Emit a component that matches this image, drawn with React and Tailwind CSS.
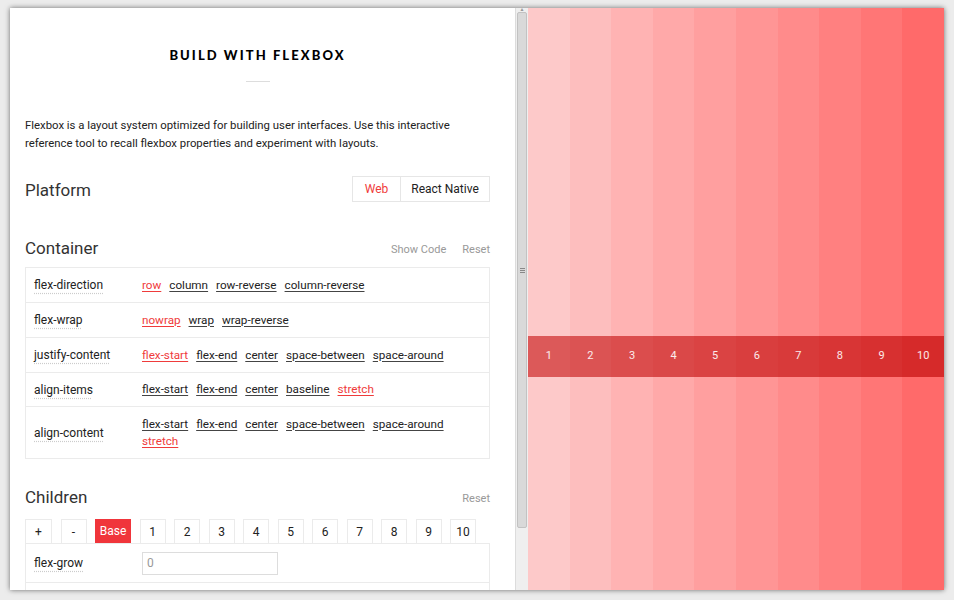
const rows = [
  { label: "flex-direction", values: ["row", "column", "row-reverse", "column-reverse"], active: "row" },
  { label: "flex-wrap", values: ["nowrap", "wrap", "wrap-reverse"], active: "nowrap" },
  { label: "justify-content", values: ["flex-start", "flex-end", "center", "space-between", "space-around"], active: "flex-start" },
  { label: "align-items", values: ["flex-start", "flex-end", "center", "baseline", "stretch"], active: "stretch" },
  {
    label: "align-content",
    values: ["flex-start", "flex-end", "center", "space-between", "space-around", "stretch"],
    active: "stretch",
  },
];

const colBg = [
  "bg-[#fdc9c9]",
  "bg-[#fdbebe]",
  "bg-[#ffb3b3]",
  "bg-[#ffa9a9]",
  "bg-[#ff9f9f]",
  "bg-[#ff9595]",
  "bg-[#ff8b8b]",
  "bg-[#ff8080]",
  "bg-[#ff7676]",
  "bg-[#ff6a6a]",
];

const bandBg = [
  "bg-[#dc5959]",
  "bg-[#db5353]",
  "bg-[#db4d4d]",
  "bg-[#da4848]",
  "bg-[#da4343]",
  "bg-[#d93e3e]",
  "bg-[#d83a3a]",
  "bg-[#d83535]",
  "bg-[#d73030]",
  "bg-[#d62a2a]",
];

const tabs = ["1", "2", "3", "4", "5", "6", "7", "8", "9", "10"];

const Columns = ({ className }) => (
  <div className={"flex " + className}>
    {colBg.map((c) => (
      <div key={c} className={"flex-1 " + c} />
    ))}
  </div>
);

const App = () => {
  return (
    <div className="w-[954px] h-[600px] bg-[#ececec] pl-[10px] pt-[8px] overflow-hidden font-['Roboto',sans-serif]">
      <div className="w-[934px] h-[582px] flex bg-white shadow-[0_0_5px_rgba(0,0,0,0.55)]">
        {/* ---------------- LEFT PANEL ---------------- */}
        <div className="w-[505px] h-full overflow-hidden pl-[15px] pr-[25px] text-[#222]">
          <h1 className="mt-[40px] text-center text-[13px] font-black tracking-[0.16em] font-['Lato',sans-serif] text-black leading-[15px]">
            BUILD WITH FLEXBOX
          </h1>
          <div className="mx-auto mt-[18px] w-[24px] h-px bg-[#ddd]" />

          <p className="mt-[34px] text-[11.35px] leading-[18px]">
            Flexbox is a layout system optimized for building user interfaces. Use this interactive reference tool
            to recall flexbox properties and experiment with layouts.
          </p>

          {/* Platform */}
          <div className="mt-[24px] flex items-center justify-between">
            <h2 className="text-[17px] text-[#333]">Platform</h2>
            <div className="mb-[4px] flex border border-[#e6e6e6] text-[12px] h-[26px]">
              <div className="w-[47px] flex items-center justify-center text-[#ef3b3b]">Web</div>
              <div className="w-[89px] flex items-center justify-center border-l border-[#e6e6e6]">React Native</div>
            </div>
          </div>

          {/* Container */}
          <div className="mt-[32px] flex items-end justify-between">
            <h2 className="text-[17px] text-[#333] leading-[20px]">Container</h2>
            <div className="flex gap-[16px] text-[11px] text-[#999]">
              <span>Show Code</span>
              <span>Reset</span>
            </div>
          </div>
          <div className="mt-[9px] border border-[#ebebeb] text-[11.7px]">
            {rows.map((r, i) => (
              <div
                key={r.label}
                className={
                  "flex items-center " +
                  (i > 0 ? "border-t border-[#ebebeb] " : "") +
                  (i === 4 ? "h-[52px]" : i === 0 ? "h-[34px]" : i === 3 ? "h-[34px]" : "h-[35px]")
                }
              >
                <div className="w-[116px] pl-[8px] text-[12px]">
                  <span className="underline decoration-dotted decoration-[#ccc] underline-offset-4">{r.label}</span>
                </div>
                <div className="flex-1 pr-[40px] flex flex-wrap gap-x-[8px] leading-[17px]">
                  {r.values.map((v) => (
                    <span
                      key={v}
                      className={
                        "underline underline-offset-2 " +
                        (v === r.active ? "text-[#ef3b3b] decoration-[#ef3b3b]" : "decoration-[#444]")
                      }
                    >
                      {v}
                    </span>
                  ))}
                </div>
              </div>
            ))}
          </div>

          {/* Children */}
          <div className="mt-[28px] flex items-end justify-between">
            <h2 className="text-[17px] text-[#333] leading-[20px]">Children</h2>
            <span className="text-[11px] text-[#999]">Reset</span>
          </div>
          <div className="mt-[12px] flex gap-[8.5px] text-[12px]">
            <div className="w-[27px] h-[24px] flex items-center justify-center border border-b-0 border-[#ebebeb]">+</div>
            <div className="w-[26px] h-[24px] flex items-center justify-center border border-b-0 border-[#ebebeb]">-</div>
            <div className="w-[36px] h-[24px] flex items-center justify-center bg-[#f0353b] text-white">Base</div>
            {tabs.map((t) => (
              <div
                key={t}
                className="w-[26px] h-[24px] flex items-center justify-center border border-b-0 border-[#ebebeb]"
              >
                {t}
              </div>
            ))}
          </div>
          <div className="border border-[#ebebeb] text-[12px]">
            <div className="h-[38px] flex items-center">
              <div className="w-[116px] pl-[8px]">
                <span className="underline decoration-dotted decoration-[#ccc] underline-offset-4">flex-grow</span>
              </div>
              <input
                type="text"
                placeholder="0"
                className="w-[136px] h-[23px] border border-[#ddd] px-[4px] text-[12px] placeholder:text-[#999] outline-none"
              />
            </div>
            <div className="h-[35px] border-t border-[#ebebeb]" />
          </div>
        </div>

        {/* ---------------- SCROLLBAR ---------------- */}
        <div className="w-[13px] h-full bg-[#efefef] border-l border-[#dcdcdc] flex flex-col items-center">
          <div className="h-[3px] text-[5px] leading-[3px] text-[#999]">▲</div>
          <div className="mt-[1px] w-[10px] h-[516px] bg-[#d9d9d9] border border-[#c2c2c2] rounded-[2px] flex items-center justify-center">
            <div className="flex flex-col gap-px">
              <div className="w-[5px] h-px bg-[#888]" />
              <div className="w-[5px] h-px bg-[#888]" />
              <div className="w-[5px] h-px bg-[#888]" />
            </div>
          </div>
        </div>

        {/* ---------------- RIGHT PANEL ---------------- */}
        <div className="flex-1 h-full flex flex-col">
          <Columns className="h-[328px]" />
          <div className="h-[41px] flex">
            {bandBg.map((c, i) => (
              <div key={c} className={"flex-1 flex items-center justify-center text-[11px] text-white/90 " + c}>
                {i + 1}
              </div>
            ))}
          </div>
          <Columns className="flex-1" />
        </div>
      </div>
    </div>
  );
};

export default App;
